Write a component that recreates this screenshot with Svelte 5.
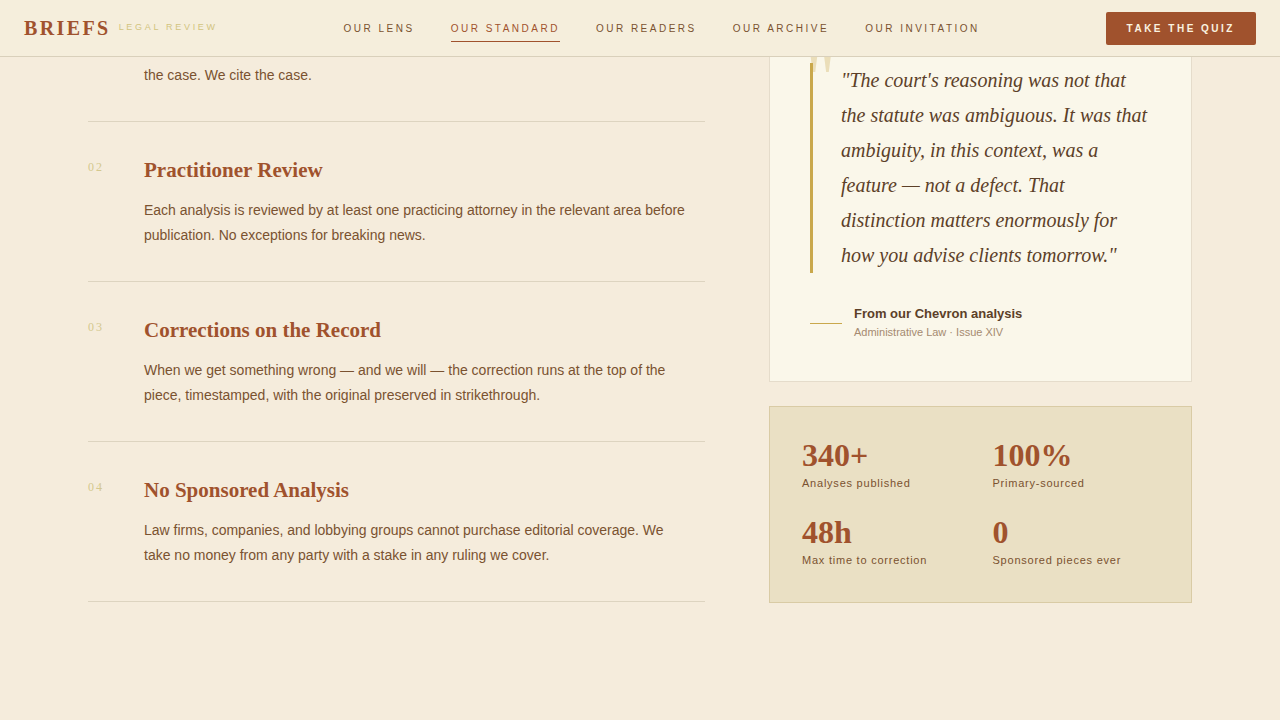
<script lang="ts">
  interface Standard {
    number: string;
    title?: string;
    body: string;
  }

  const links = [
    { label: 'Our Lens', href: '#lens' },
    { label: 'Our Standard', href: '#standard' },
    { label: 'Our Readers', href: '#readers' },
    { label: 'Our Archive', href: '#archive' },
    { label: 'Our Invitation', href: '#invitation' }
  ];

  const standards: Standard[] = [
    { number: '', body: 'the case. We cite the case.' },
    {
      number: '02',
      title: 'Practitioner Review',
      body: 'Each analysis is reviewed by at least one practicing attorney in the relevant area before publication. No exceptions for breaking news.'
    },
    {
      number: '03',
      title: 'Corrections on the Record',
      body: 'When we get something wrong — and we will — the correction runs at the top of the piece, timestamped, with the original preserved in strikethrough.'
    },
    {
      number: '04',
      title: 'No Sponsored Analysis',
      body: 'Law firms, companies, and lobbying groups cannot purchase editorial coverage. We take no money from any party with a stake in any ruling we cover.'
    }
  ];

  const stats = [
    { value: '340+', label: 'Analyses published' },
    { value: '100%', label: 'Primary-sourced' },
    { value: '48h', label: 'Max time to correction' },
    { value: '0', label: 'Sponsored pieces ever' }
  ];

  let active = $state('#standard');
</script>

<header class="header">
  <a class="brand" href="#top">
    <span class="brand-name">BRIEFS</span>
    <span class="brand-tag">LEGAL REVIEW</span>
  </a>
  <nav class="nav">
    {#each links as link}
      <a
        class="nav-link"
        class:active={active === link.href}
        href={link.href}
        onclick={() => (active = link.href)}
      >
        {link.label}
      </a>
    {/each}
  </nav>
  <button class="cta" type="button">TAKE THE QUIZ</button>
</header>

<main class="container">
  <div class="standards">
    {#each standards as item}
      <article class="standard">
        <span class="standard-number">{item.number}</span>
        <div>
          {#if item.title}
            <h3>{item.title}</h3>
          {/if}
          <p>{item.body}</p>
        </div>
      </article>
    {/each}
  </div>

  <aside class="side">
    <figure class="quote-card">
      <span class="quote-mark" aria-hidden="true">"</span>
      <blockquote>
        "The court's reasoning was not that the statute was ambiguous. It was that ambiguity, in this
        context, was a feature — not a defect. That distinction matters enormously for how you advise
        clients tomorrow."
      </blockquote>
      <figcaption>
        <span class="rule"></span>
        <div>
          <div class="source">From our Chevron analysis</div>
          <div class="issue">Administrative Law · Issue XIV</div>
        </div>
      </figcaption>
    </figure>

    <div class="stats">
      {#each stats as stat}
        <div>
          <div class="stat-value">{stat.value}</div>
          <div class="stat-label">{stat.label}</div>
        </div>
      {/each}
    </div>
  </aside>
</main>

<style>
  :global(body) {
    --rust: #a0522d;
    --brown: #7a5230;
    --dark: #5c4028;
    --gold: #c9a84c;
    --line: #ddd4c0;
    --serif: 'Liberation Serif', 'Times New Roman', serif;
    background: #f5ecdc;
    color: var(--brown);
    font-family: 'Liberation Sans', Arial, sans-serif;
  }

  /* Header */
  .header {
    position: fixed;
    top: 0;
    left: 0;
    right: 0;
    z-index: 10;
    display: flex;
    align-items: center;
    justify-content: space-between;
    height: 56px;
    padding: 0 24px;
    background: #f5eedc;
    border-bottom: 1px solid #d9d0bb;
  }

  .brand {
    display: flex;
    align-items: center;
    gap: 8px;
    text-decoration: none;
  }

  .brand-name {
    color: var(--rust);
    font-family: var(--serif);
    font-size: 20px;
    font-weight: 700;
    letter-spacing: 0.12em;
  }

  .brand-tag {
    padding-bottom: 2px;
    color: #d2c480;
    font-size: 9px;
    letter-spacing: 0.3em;
  }

  .nav {
    display: flex;
    gap: 36px;
  }

  .nav-link {
    padding: 7px 0 5px;
    border-bottom: 1px solid transparent;
    color: var(--brown);
    font-size: 10px;
    line-height: 14px;
    letter-spacing: 0.25em;
    text-decoration: none;
    text-transform: uppercase;
  }

  .nav-link:hover,
  .nav-link.active {
    color: var(--rust);
  }

  .nav-link.active {
    border-bottom-color: var(--rust);
  }

  .cta {
    padding: 10px 21px;
    border: none;
    border-radius: 2px;
    background: var(--rust);
    color: #faf3e0;
    font-family: inherit;
    font-size: 10px;
    font-weight: 700;
    line-height: 13px;
    letter-spacing: 0.25em;
    cursor: pointer;
  }

  /* Page */
  .container {
    display: grid;
    grid-template-columns: 617fr 423fr;
    align-items: start;
    gap: 64px;
    box-sizing: border-box;
    max-width: 1200px;
    margin: 0 auto;
    padding: 22px 48px 96px;
  }

  .standard {
    display: grid;
    grid-template-columns: 40px 1fr;
    gap: 16px;
    padding: 32px 0 33px;
    border-bottom: 1px solid var(--line);
  }

  .standard:first-child {
    padding-top: 41px;
  }

  .standard-number {
    padding-top: 6px;
    color: #d4c88e;
    font-family: var(--serif);
    font-size: 12px;
    letter-spacing: 2px;
  }

  h3 {
    margin: 0 0 12px;
    color: var(--rust);
    font-family: var(--serif);
    font-size: 21px;
    line-height: 32px;
  }

  p {
    max-width: 544px;
    margin: 0;
    font-size: 14px;
    line-height: 25px;
  }

  .side {
    display: grid;
    gap: 24px;
  }

  /* Quote */
  .quote-card {
    position: relative;
    margin: 0;
    padding: 40px;
    background: #faf7ea;
    border: 1px solid #e5dccb;
  }

  .quote-mark {
    position: absolute;
    top: 19px;
    left: 36px;
    color: var(--gold);
    font-family: var(--serif);
    font-size: 72px;
    line-height: 1;
    opacity: 0.3;
  }

  blockquote {
    margin: 0 0 32px;
    padding-left: 28px;
    border-left: 3px solid var(--gold);
    color: var(--dark);
    font-family: var(--serif);
    font-size: 20px;
    font-style: italic;
    line-height: 35px;
  }

  figcaption {
    display: flex;
    align-items: center;
    gap: 12px;
  }

  .rule {
    width: 32px;
    height: 1px;
    background: var(--gold);
  }

  .source {
    color: var(--dark);
    font-size: 13px;
    font-weight: 700;
    line-height: 18px;
  }

  .issue {
    color: #a58a70;
    font-size: 11px;
    line-height: 18px;
  }

  /* Stats */
  .stats {
    display: grid;
    grid-template-columns: 1fr 1fr;
    gap: 24px;
    padding: 32px 32px 33px;
    background: #eae0c4;
    border: 1px solid #d9cba5;
  }

  .stat-value {
    margin-bottom: 3px;
    color: var(--rust);
    font-family: var(--serif);
    font-size: 32px;
    font-weight: 700;
    line-height: 32px;
  }

  .stat-label {
    font-size: 11px;
    line-height: 18px;
    letter-spacing: 0.07em;
  }
</style>
